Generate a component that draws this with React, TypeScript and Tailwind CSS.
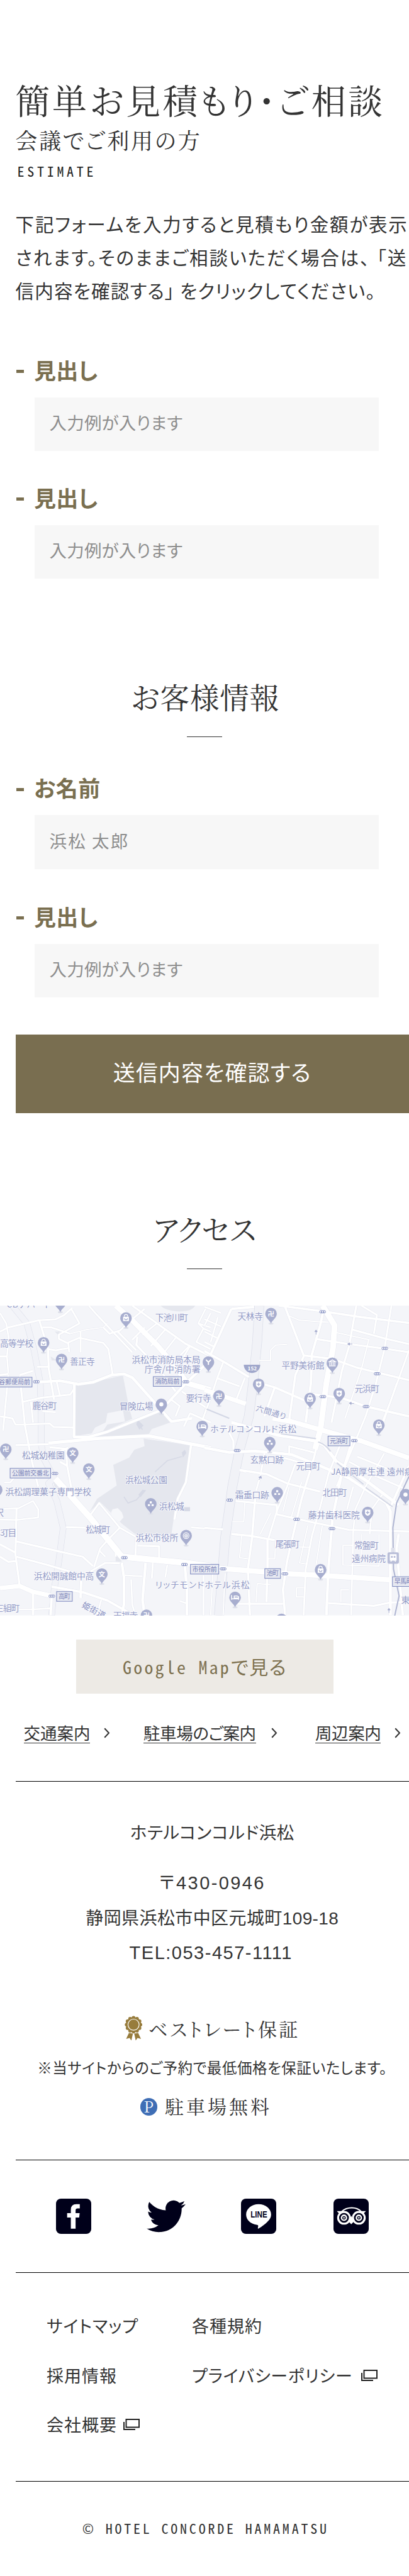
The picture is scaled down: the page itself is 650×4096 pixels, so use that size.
import type { ReactNode } from "react";

const SANS = "font-['Noto_Sans_CJK_JP',sans-serif]";
const SERIF = "font-['Noto_Serif_CJK_JP','Noto_Sans_CJK_JP',serif]";
const MONO = "font-['Noto_Sans_Mono_CJK_JP','Liberation_Mono',monospace]";
const LATIN = "font-['Liberation_Sans','Noto_Sans_CJK_JP',sans-serif]";

function Field({ label, tracking, placeholder, inputTracking }: { label: string; tracking: string; placeholder: string; inputTracking: string }) {
  return (
    <div>
      <label className="flex h-9 items-center text-[35px] leading-9 font-bold text-[#7a6f50]">
        <span aria-hidden="true" className="mt-1.5 mr-[16px] ml-px h-[5px] w-[12.5px] bg-[#7a6f50]" />
        <span className={tracking}>{label}</span>
      </label>
      <div className={`mt-[26px] ml-[30px] flex h-[85.4px] w-[547px] items-center bg-[#f7f7f7] pb-[5px] pl-[24px] text-[27.5px] text-[#8e8e8e] ${inputTracking}`}>
        {placeholder}
      </div>
    </div>
  );
}

function SectionTitle({ children }: { children: ReactNode }) {
  return (
    <div className={`flex flex-col items-center ${SERIF}`}>
      <h2 className="h-[50px] pl-px text-[46.5px] leading-[48px] tracking-[0.8px]">{children}</h2>
      <div className="mt-[38px] h-px w-14 bg-[#333]" />
    </div>
  );
}

function Chevron() {
  return (
    <svg viewBox="0 0 10 17" className="h-[17px] w-2.5" fill="none" stroke="#333" strokeWidth="2">
      <path d="M1.2 1.2 8 8.5 1.2 15.8" />
    </svg>
  );
}

function WindowIcon() {
  return (
    <svg viewBox="0 0 26 18" className="h-[18px] w-[26px]" fill="none" stroke="#222" strokeWidth="2">
      <path d="M4.5 1H25v12.5H4.5zM1 5v12h18" />
    </svg>
  );
}

type Label = [string, number, number, number, number?];
type Pin = [string, number, number];
type Road = [number, string];

const leftRoads: Road[] = [
  [8, "M0 60 30 110 42 180 34 270 40 350"],
  [9, "M0 150 40 130 190 95 270 90 310 70 350 35"],
  [10, "M190 95 210 160 232 230 236 330 262 480"],
  [9, "M345 40 385 110 285 165 285 185 325 205 385 180 500 205 525 235 545 355"],
  [9, "M205 130 250 130 340 160M390 150V250M330 200 335 250M230 235 270 240 330 230M180 320H240"],
  [5, "M340 160 420 140 500 130 520 110"],
  [9, "M430 24 470 70 640 250M500 130 530 160 580 145 640 90 700 40M570 150 660 240"],
  [10, "M640 24 760 110 900 210 1020 270"],
  [8, "M690 165 760 110M730 220 800 140M780 270 850 180M640 190 700 130M840 300 920 215"],
  [8, "M1000 30 960 110 985 135 950 200 1020 235M960 110 1020 130M985 135 1020 150M920 220 890 270"],
  [26, "M560 24 640 95 760 215 850 320 905 400 1020 432"],
  [10, "M665 175 660 215 770 330 850 440"],
  [14, "M180 395 290 388 380 405 450 395 540 360 600 355 640 372 830 585 930 570"],
  [10, "M0 270H34M0 360 40 355M95 360 160 340M95 365 110 500 120 600 150 760 185 900"],
  [9, "M110 490 200 470 340 455 360 425M275 395 290 460M150 490 160 590M205 535 270 540"],
  [9, "M40 360 15 630M0 560 60 570 75 600 120 600 240 595 260 612 358 615"],
  [13, "M360 400 358 660 430 660 520 635 780 530 900 400 1020 285"],
  [9, "M830 480 870 510 850 560M880 440 1000 520M920 545 1020 590M920 545 890 610M1000 520 980 580"],
  [16, "M235 690 470 668 720 655 1020 712"],
  [10, "M75 700 235 695M240 710 320 718 325 800 345 905M290 780 325 800M280 735 330 712"],
  [30, "M268 862 440 1055 590 1240 880 1268 1020 1286"],
  [9, "M440 1035 480 980 580 1100 660 1145M580 1100 530 1150 485 1200 455 1290M440 1310 510 1270 580 1272"],
  [8, "M0 1010 90 1005 160 970 185 1010 185 1050 80 1062 0 1060M20 880H50L75 850"],
  [10, "M80 1005 75 1230 95 1380M0 1180 75 1220M0 1240 40 1265 75 1262"],
  [10, "M75 1165 290 1215 400 1240 450 1285M80 1240 230 1280 400 1330"],
  [9, "M320 1097 420 1100M925 1098 1020 1105"],
  [11, "M925 700 900 880 860 960 845 1060"],
  [9, "M660 1150 655 1240M665 1187 770 1190V1255M740 1270 735 1345M560 1240V1190"],
  [13, "M590 1270 600 1340 600 1470 590 1524M705 1270 690 1450 700 1524M895 1285 905 1400 905 1524"],
  [8, "M605 1330 690 1335M635 1350 640 1470 655 1524M810 1280 800 1340M985 1330V1524M870 1455 900 1465"],
  [22, "M0 1392 95 1382 160 1410 250 1430"],
  [12, "M250 1385 400 1412 520 1452 640 1520M250 1430 245 1524M160 1410V1524M395 1310 390 1440"],
  [8, "M90 1495 160 1495 245 1490M490 1450 470 1524M480 1210 510 1240"],
];
const rightRoads: Road[] = [
  [12, "M0 245 100 300 215 370M130 40 30 260M130 40 240 30"],
  [8, "M0 30 80 60M0 90 80 125M0 150 60 180M30 60 0 120M65 80 30 200M0 200 50 225"],
  [9, "M90 300 60 380 30 470 0 550M60 375 170 415M195 375 150 490M0 435 100 460"],
  [22, "M0 432 90 462 200 500"],
  [11, "M360 24 560 50 760 80 990 108M390 30 480 265 620 282 740 325 990 385"],
  [6, "M400 70 460 95 600 105M265 290H320V240L345 215 400 212M640 155 800 190"],
  [12, "M575 50 560 120 520 260 515 400 490 590"],
  [28, "M572 24 630 120 622 230 590 400 562 620 535 720"],
  [10, "M535 185 700 210 870 232 990 250M715 140 880 185 990 210M735 24 700 220 665 340 615 590"],
  [9, "M760 24 835 70 820 160M905 24 870 240 830 400 780 560 705 740 640 900M990 240 900 490 840 640"],
  [11, "M480 270 440 360 410 580M270 400 340 420 500 490M340 420 290 560"],
  [12, "M500 450 660 470 780 512 990 560"],
  [7, "M795 190 760 330 680 570M930 400 860 610"],
  [24, "M330 570 420 585 560 625 760 680 990 762"],
  [16, "M130 590 350 650 540 680 580 700 640 780 780 870 940 990"],
  [10, "M100 600 140 680V720"],
  [14, "M0 712 120 735 240 728 420 745 560 800 700 860 880 980 900 1020 900 1524"],
  [9, "M410 750V705L530 735M290 740 270 850 250 920M200 830 170 820M380 760 520 800M700 780 830 850 990 920M740 755 900 820"],
  [11, "M170 820 300 840 400 885 560 925M560 640 530 760 470 960 430 1130 400 1260 380 1400 390 1524"],
  [9, "M660 690 600 840 560 1000 520 1140 490 1300 480 1524M440 790 400 900 350 1020 310 1150"],
  [10, "M150 970 350 990 350 1035 530 1075 700 1110 990 1118"],
  [13, "M720 660 660 860 620 1050 600 1300 590 1524"],
  [8, "M870 740 780 900 730 1010 720 1120 710 1524M720 900 690 1010M860 940 810 1010 800 1130"],
  [6, "M410 900 380 1020M470 880 420 1050M500 1090 460 1270 490 1275M570 1090 540 1280M195 980 190 1070H135M320 1030 270 1130"],
  [11, "M245 960 230 1150 210 1300 220 1524M130 1130 230 1140 340 1160M305 1150V1290L300 1460"],
  [6, "M180 1140 170 1245 210 1250M345 1165 340 1250 305 1250M410 1190 510 1195M670 1185V1280L845 1285V1130M760 1130V1230M670 1185H720"],
  [26, "M0 1290 90 1298 400 1322 640 1335 900 1352"],
  [10, "M0 1100 90 1108M160 1468 380 1468M600 1465 820 1478 900 1462 990 1460"],
  [6, "M255 1370 250 1460M255 1370 320 1375M445 1390H480M445 1390V1435H480M660 1460V1400H700M40 1320 30 1524M100 1320 90 1524"],
  [12, "M990 800 900 1000M940 1130 930 1200 945 1360 960 1524"],
];

const leftLabels: Label[] = [
  ["CBナバート", 32, 33, 215],
  ["下池川町", 752, 98, 158],
  ["高等学校", 0, 221, 162],
  ["善正寺", 338, 311, 121],
  ["浜松市消防局本局", 638, 300, 332],
  ["庁舎/中消防署", 700, 347, 270],
  ["鹿谷町", 157, 525, 118],
  ["冒険広場", 578, 527, 164],
  ["要行寺", 900, 488, 122],
  ["松城幼稚園", 107, 764, 206],
  ["浜松城公園", 606, 884, 204],
  ["浜松調理菓子専門学校", 26, 942, 416],
  ["浜松城", 770, 1011, 122],
  ["沢", -24, 1040, 40],
  ["松城町", 415, 1125, 118],
  ["3丁目", 0, 1140, 80],
  ["浜松市役所", 657, 1163, 206],
  ["浜松開誠館中高", 164, 1350, 291],
  ["リッチモンドホテル浜松", 752, 1392, 456],
  ["三組町", -22, 1505, 117],
  ["天福寺", 548, 1540, 120],
];
const rightLabels: Label[] = [
  ["天林寺", 160, 90, 123],
  ["平野美術館", 373, 330, 207],
  ["元浜町", 727, 441, 119],
  ["ホテルコンコルド浜松", 28, 635, 417],
  ["玄黙口跡", 221, 785, 163],
  ["元目町", 443, 816, 118],
  ["JA静岡厚生連 遠州病院", 612, 843, 440],
  ["霜垂口跡", 148, 956, 165],
  ["北田町", 571, 945, 118],
  ["藤井歯科医院", 502, 1052, 250],
  ["尾張町", 343, 1194, 117],
  ["常盤町", 725, 1200, 118],
  ["遠州病院", 713, 1263, 164],
  ["東", 952, 1464, 38],
];
const leftTags: [string, number, number, number][] = [
  ["谷郵便局前", -14, 371, 169],
  ["消防局前", 742, 368, 136],
  ["公園前交番北", 49, 812, 196],
  ["高町", 274, 1409, 76],
  ["市役所前", 922, 1277, 137],
];
const rightTags: [string, number, number, number][] = [
  ["元浜町", 598, 656, 106],
  ["池町", 292, 1298, 76],
  ["早馬町", 910, 1337, 106],
];
const leftPins: Pin[] = [
  ["none", 292, 8], ["bag", 610, 84], ["bag", 211, 204], ["卍", 298, 285], ["Y", 1009, 297], ["dot", 781, 502],
  ["bed", 979, 609], ["卍", 28, 720], ["文", 352, 738], ["文", 430, 816], ["none", -16, 916], ["dots", 730, 984],
  ["target", 901, 1138], ["文", 493, 1324], ["卍", 709, 1524],
];
const rightPins: Pin[] = [
  ["卍", 322, 63], ["museum", 619, 303], ["plus", 262, 405], ["plus", 652, 450], ["卍", 70, 462], ["bag", 511, 474],
  ["bag", 844, 603], ["dots", 316, 687], ["dots", 352, 930], ["dot", 973, 939], ["plus", 790, 1026], ["bag", 562, 1303],
  ["bed", 148, 1437], ["none", 373, 1544],
];
const leftSignals = [[176, 393], [900, 393], [266, 837], [602, 1245], [893, 1278], [251, 1431]];
const rightSignals = [[572, 54], [873, 231], [836, 354], [573, 465], [782, 513], [725, 678], [158, 726], [122, 966], [446, 1059], [617, 1104], [90, 1299], [389, 1323]];

function PinGlyph({ kind }: { kind: string }) {
  switch (kind) {
    case "bag":
      return (
        <g>
          <path d="M-14-6H14V15H-14z" fill="#fff" />
          <path d="M-8-6V-9A8 8 0 0 1 8-9V-6" fill="none" stroke="#fff" strokeWidth="3.5" />
          <path d="M-7 2A7 7 0 0 0 7 2" fill="none" stroke="#a8aecf" strokeWidth="3.5" />
        </g>
      );
    case "dot":
      return <circle r="10" fill="#fff" />;
    case "dots":
      return <path d="M-5-12H5V-2H-5zM-14 2H-4V11H-14zM4 2H14V11H4z" fill="#fff" />;
    case "plus":
      return (
        <g>
          <path d="M-13-14H13V6Q10 13 0 16Q-10 13-13 6z" fill="#fff" />
          <path d="M0-8V8M-8 0H8" stroke="#a8aecf" strokeWidth="4" />
        </g>
      );
    case "bed":
      return <path d="M-17-11V12M-17 7H17M17 12V-3L10-7H-4V3H15" fill="none" stroke="#fff" strokeWidth="4.5" />;
    case "target":
      return (
        <g fill="none" stroke="#fff" strokeWidth="3.5">
          <circle r="14" />
          <circle r="7" />
          <circle r="1.5" />
        </g>
      );
    case "museum":
      return <path d="M-15-7 0-16 15-7zM-12-4V10M-4-4V10M4-4V10M12-4V10M-16 13H16" fill="none" stroke="#fff" strokeWidth="4" />;
    case "Y":
      return <path d="M-12-11 0 1 12-11M0 0V14" fill="none" stroke="#fff" strokeWidth="6" />;
    case "none":
      return null;
    default:
      return (
        <text textAnchor="middle" y="12" fontSize="32" fontWeight="700" fill="#fff">
          {kind}
        </text>
      );
  }
}

function MapLayer({ roads, labels, tags, pins, signals }: { roads: Road[]; labels: Label[]; tags: [string, number, number, number][]; pins: Pin[]; signals: number[][] }) {
  return (
    <g>
      <g fill="none" strokeLinejoin="round">
        {roads.map(([w, d]) => <path key={d} d={d} stroke="#e4e6ef" strokeWidth={w + 3} />)}
        {roads.map(([w, d]) => <path key={d} d={d} stroke="#fff" strokeWidth={w} />)}
      </g>
      {signals.map(([x, y]) => (
        <g key={`${x}-${y}`} transform={`translate(${x} ${y})`}>
          <rect x="-14" y="-5.5" width="28" height="11" rx="4" fill="#fff" stroke="#7d88bd" strokeWidth="3" />
          <path d="M-5-4V4M5-4V4" stroke="#7d88bd" strokeWidth="4" />
        </g>
      ))}
      {pins.map(([kind, x, y]) => (
        <g key={`${x}-${y}`} transform={`translate(${x} ${y})`}>
          <ellipse cy="48" rx="12" ry="5" fill="#dfe1ea" />
          <path d="M0 49C-4 31-28 23-28 0A28 28 0 1 1 28 0C28 23 4 31 0 49z" fill="#a8aecf" />
          <PinGlyph kind={kind} />
        </g>
      ))}
      {labels.map(([t, x, y, len]) => (
        <text key={t} x={x} y={y} textLength={len} fontSize="42" fill="#929ac6" stroke="#fafafd" strokeWidth="5" paintOrder="stroke">
          {t}
        </text>
      ))}
      {tags.map(([t, x, y, w]) => (
        <g key={t}>
          <rect x={x} y={y} width={w} height="47" fill="#e7e9f1" stroke="#7a86bd" strokeWidth="3" />
          <text x={x + 9} y={y + 34} textLength={w - 18} fontSize="30" fill="#7680b8">{t}</text>
        </g>
      ))}
    </g>
  );
}

const STREAM = "M60 24 130 110 165 240 195 400 200 560 200 700 215 770 262 860 235 885 275 970 306 1100 285 1260 262 1400 250 1524";
const ROUTE_152 = "M1255 24 1245 200 1225 400 1205 560 1160 720 1125 900 1090 1150 1060 1524";

function AccessMap() {
  return (
    <svg viewBox="0 24 1980 1500" preserveAspectRatio="none" className={`block h-[492.5px] w-full ${SANS}`}>
      <rect y="24" width="1980" height="1500" fill="#f4f5f9" />
      <g fill="#e5e7ee">
        <path d="M365 408 450 395 595 362 625 520 640 572 500 635 365 655z" />
        <path d="M460 662 520 635 770 532 800 560 825 590 735 622 718 650z" />
        <path d="M695 668 920 700 900 880 855 960 830 1130 660 1135 590 1080 485 975 435 1020 470 960 565 895 548 795 625 760 650 722 700 705z" />
        <path d="M778 24H945Q930 52 870 52 800 50 778 24zM262 868 290 890 285 925 262 895zM560 1220 590 1265 560 1262z" />
        <path d="M245 270 275 290 250 290zM265 150 290 150 280 165z" />
      </g>
      <path d="M520 545 595 530 605 585 520 600 500 630 440 650 460 615 512 590z" fill="#f4f5f9" />
      <path d="M545 1010 570 1005 590 1025 598 1050 580 1070 545 1050 538 1025z" fill="#f6f7fa" />
      <path d="M600 950 620 980 660 965 700 920M750 830 810 775 880 755M665 590 690 625" fill="none" stroke="#d7dae6" strokeWidth="5" />
      <path d="M670 940 690 916 708 918 680 952zM665 575 695 605 675 625 660 600zM880 735 895 722 902 738 885 760zM890 1000H920V1020H890z" fill="#d7dae6" />
      <g fill="none" strokeLinejoin="round">
        <path d={STREAM} stroke="#d9dce8" strokeWidth="31" />
        <path d={STREAM} stroke="#f2f3f8" strokeWidth="28" />
        <path d={ROUTE_152} stroke="#d9dce8" strokeWidth="47" />
        <path d={ROUTE_152} stroke="#f1f2f7" strokeWidth="43" />
      </g>
      <MapLayer roads={leftRoads} labels={[]} tags={[]} pins={[]} signals={[]} />
      <g transform="translate(990 0)">
        <MapLayer roads={rightRoads} labels={[]} tags={[]} pins={[]} signals={[]} />
        <path d="M370 645 540 668M550 685Q580 690 610 730M640 785 770 890M780 905 910 998M10 525 120 570" fill="none" stroke="#d3d7e5" strokeWidth="6" />
        <path d="M1000 830 930 980 912 1100 915 1300 942 1430 920 1530" fill="none" stroke="#aeb4d1" strokeWidth="6" />
        <rect x="903" y="1197" width="18" height="22" fill="#dfe1ec" />
        <rect x="886" y="1219" width="55" height="55" rx="8" fill="#b9bed8" />
        <path d="M899 1230H928V1257H899zM901 1264 908 1257M926 1264 919 1257" fill="#fff" stroke="#fff" strokeWidth="4" />
        <path d="M903 1236H911V1245H903zM916 1236H924V1245H916z" fill="#b9bed8" />
        <path d="M190 310H270Q268 345 230 351 192 345 190 310z" fill="#a0a7cb" />
        <text x="231" y="338" textAnchor="middle" fontSize="25" fontWeight="700" fill="#fff">152</text>
        <path d="M540 164V145M534 150 540 142 546 150zM716 210H696M702 204 693 210 702 216zM724 498H706M710 491 701 497 710 503zM264 868 271 852M263 856 273 849 276 860zM893 1512V1494M887 1498 893 1490 899 1498z" fill="#a8aecf" stroke="#a8aecf" strokeWidth="3" />
      </g>
      <MapLayer roads={[]} labels={leftLabels} tags={leftTags} pins={leftPins} signals={leftSignals} />
      <g transform="translate(990 0)">
        <MapLayer roads={[]} labels={rightLabels} tags={rightTags} pins={rightPins} signals={rightSignals} />
        <text transform="translate(246 532) rotate(17)" textLength="150" fontSize="38" fill="#929ac6" stroke="#fafafd" strokeWidth="5" paintOrder="stroke">六間通り</text>
      </g>
      <text transform="translate(394 1482) rotate(29)" textLength="122" fontSize="40" fill="#868fc1" stroke="#fafafd" strokeWidth="5" paintOrder="stroke">姫街道</text>
    </svg>
  );
}

function Medal() {
  const lobes = Array.from({ length: 12 }, (_, i) => (i * Math.PI) / 6);
  return (
    <svg viewBox="0 0 29 40" className="h-[39.5px] w-[28.5px]" fill="#977c3c">
      <circle cx="14.5" cy="14.5" r="12.4" />
      {lobes.map((a) => <circle key={a} cx={14.5 + 11.2 * Math.cos(a)} cy={14.5 + 11.2 * Math.sin(a)} r="2.9" />)}
      <circle cx="14.5" cy="14.5" r="9" fill="none" stroke="#fff" strokeWidth="1.2" />
      <path d="M7 28 13.5 29 11 40 8 36 2.5 37.5zM22 28 15.5 29 18 40 21 36 26.5 37.5z" />
    </svg>
  );
}

function FacebookIcon() {
  return (
    <svg viewBox="0 0 57 57" className="size-14">
      <rect width="57" height="57" rx="8" fill="#00001a" />
      <path d="M24 48.5V30.5H18V23.5H24V18Q24 9 33 9H38.5V15.8H35Q31.7 15.8 31.7 19V23.5H38.3L37.5 30.5H31.7V48.5z" fill="#fff" />
    </svg>
  );
}

function TwitterIcon() {
  return (
    <svg viewBox="0 0 24 24" className="h-[62px] w-[62px]" fill="#00001a">
      <path d="M23.953 4.57a10 10 0 0 1-2.825.775 4.958 4.958 0 0 0 2.163-2.723c-.951.555-2.005.959-3.127 1.184a4.92 4.92 0 0 0-8.384 4.482C7.69 8.095 4.067 6.13 1.64 3.162a4.822 4.822 0 0 0-.666 2.475c0 1.71.87 3.213 2.188 4.096a4.904 4.904 0 0 1-2.228-.616v.06a4.923 4.923 0 0 0 3.946 4.827 4.996 4.996 0 0 1-2.212.085 4.936 4.936 0 0 0 4.604 3.417 9.867 9.867 0 0 1-6.102 2.105c-.39 0-.779-.023-1.17-.067a13.995 13.995 0 0 0 7.557 2.209c9.053 0 13.998-7.496 13.998-13.985 0-.21 0-.42-.015-.63A9.935 9.935 0 0 0 24 4.59z" />
    </svg>
  );
}

function LineIcon() {
  return (
    <svg viewBox="0 0 57 57" className="size-14">
      <rect width="57" height="57" rx="8" fill="#00001a" />
      <path d="M28.5 9C39.5 9 48.7 16.2 48.7 25.8 48.7 30 47 33.5 43 37.2 38.5 42 32 46.5 28 48.5 26.8 48.8 27.6 46 27.8 44.5 28 42.8 27 42.6 25 42.3 15.5 41 8.3 34.5 8.3 25.8 8.3 16.2 17.5 9 28.5 9z" fill="#fff" />
      <text x="29" y="31" textAnchor="middle" textLength="27" lengthAdjust="spacingAndGlyphs" fontSize="14.5" fontWeight="700" fill="#00001a" className={LATIN}>LINE</text>
    </svg>
  );
}

function OwlIcon() {
  return (
    <svg viewBox="0 0 57 57" className="size-14">
      <rect width="57" height="57" rx="8" fill="#00001a" />
      <path d="M13 21Q20 14.8 29.5 14.8T45 21" fill="none" stroke="#fff" strokeWidth="2" />
      <path d="M5.5 20H16.5L9.5 25zM52.5 20H41L48 25z" fill="#fff" />
      <path d="M23.5 36 28.7 41.5 34 36 28.7 28z" fill="#fff" />
      {[17, 41].map((x) => (
        <g key={x} fill="none" stroke="#fff">
          <circle cx={x} cy="31" r="9.5" fill="#00001a" strokeWidth="3.2" />
          <circle cx={x} cy="31" r="4" strokeWidth="2.4" />
          <circle cx={x} cy="31" r="1.1" fill="#fff" strokeWidth="0.5" />
        </g>
      ))}
    </svg>
  );
}

export default function App() {
  return (
    <main className={`h-[4096px] w-[650px] overflow-hidden bg-white text-[#333] whitespace-nowrap [font-feature-settings:'palt'] ${SANS}`}>
      <section className="pl-[24.6px]">
        <h1 className={`pt-32 text-[55px] leading-[60px] tracking-[3.5px] ${SERIF}`}>簡単お見積もり・ご相談</h1>
        <p className={`mt-3.5 text-[35px] leading-10 tracking-[2.7px] ${SERIF}`}>会議でご利用の方</p>
        <p className={`mt-[17px] pl-[3px] text-[22px] leading-6 tracking-[4.7px] text-[#222] ${MONO}`}>ESTIMATE</p>
        <p className="mt-[46px] text-[29.5px] leading-[53.2px]">
          <span className="block tracking-[1.8px]">下記フォームを入力すると見積もり金額が表示</span>
          <span className="block tracking-[1.95px]">
            されます。そのままご相談いただく場合は、<span className="ml-2.5">「送</span>
          </span>
          <span className="block tracking-[1.2px]">
            信内容を確認する」<span className="ml-2">をクリックしてください。</span>
          </span>
        </p>
        <div className="mt-[81px] flex flex-col gap-[55.5px]">
          <Field label="見出し" tracking="tracking-[0.2px]" placeholder="入力例が入ります" inputTracking="tracking-[0.2px]" />
          <Field label="見出し" tracking="tracking-[0.2px]" placeholder="入力例が入ります" inputTracking="tracking-[0.2px]" />
        </div>
      </section>

      <section className="mt-[163.3px]">
        <SectionTitle>お客様情報</SectionTitle>
        <div className="mt-[62.3px] flex flex-col gap-[56.8px] pl-[24.6px]">
          <Field label="お名前" tracking="tracking-[0.7px]" placeholder="浜松 太郎" inputTracking="tracking-[2.1px]" />
          <Field label="見出し" tracking="tracking-[0.2px]" placeholder="入力例が入ります" inputTracking="tracking-[0.2px]" />
        </div>
        <div className="mt-[59.2px] pl-[24.6px]">
          <button className="flex h-[125px] w-full items-center justify-center bg-[#796e50] pb-[7px] text-[35px] tracking-[1.1px] text-white">
            送信内容を確認する
          </button>
        </div>
      </section>

      <section className="mt-[158.5px]">
        <SectionTitle>アクセス</SectionTitle>
        <div className="mt-[58.5px]">
          <AccessMap />
        </div>
        <a className="mt-[38.5px] ml-[121.2px] flex h-[85.7px] w-[408.8px] items-center justify-center bg-[#edeae5] pb-px text-[#7d7150]">
          <span className={`text-[28px] tracking-[3.2px] ${MONO}`}>Google Map</span>
          <span className="text-[30px] tracking-[1.5px]">で見る</span>
        </a>
        <nav className="mt-[46px] flex h-[33px] items-center pl-[37.5px] text-[26.5px] leading-8">
          <span className="w-[105px] border-b border-[#333]">交通案内</span>
          <span className="mr-[53.5px] ml-[22px]"><Chevron /></span>
          <span className="w-[178.5px] border-b border-[#333] tracking-[-0.4px]">駐車場のご案内</span>
          <span className="mr-[60px] ml-[24.5px]"><Chevron /></span>
          <span className="w-[104px] border-b border-[#333] tracking-[-0.4px]">周辺案内</span>
          <span className="ml-[22px]"><Chevron /></span>
        </nav>
      </section>

      <footer className="mt-[60.5px] pl-[24.6px]">
        <div className="flex flex-col items-center border-t border-black pt-[61px]">
          <p className="text-[27.5px] leading-9 tracking-[0.5px]">ホテルコンコルド浜松</p>
          <address className={`mt-[37px] text-center text-[29px] leading-[55.15px] not-italic ${LATIN}`}>
            <p className="tracking-[2.4px]">〒430-0946</p>
            <p className="text-[28px] tracking-[0.4px]">静岡県浜松市中区元城町109-18</p>
            <p className="pr-1 tracking-[1.5px]">TEL:053-457-1111</p>
          </address>
          <p className={`mt-[72px] flex h-10 items-center gap-2.5 text-[30px] leading-10 tracking-[3.4px] ${SERIF}`}>
            <Medal />
            <span>ベストレート保証</span>
          </p>
          <p className="mt-[27px] text-[23.5px] leading-[30px] tracking-[0.53px]">※当サイトからのご予約で最低価格を保証いたします。</p>
          <p className={`mt-[26px] flex h-10 items-center gap-3 pr-5 text-[30px] leading-10 tracking-[4px] ${SERIF}`}>
            <span className="mt-1 flex size-[27.5px] items-center justify-center rounded-full bg-[#3f6eb5] pb-0.5 pl-1 text-[24px] text-white">P</span>
            <span>駐車場無料</span>
          </p>
        </div>
        <div className="mt-[65.8px] flex h-[180.2px] items-center border-y border-black">
          <span className="ml-16"><FacebookIcon /></span>
          <span className="ml-[88px]"><TwitterIcon /></span>
          <span className="ml-[88px]"><LineIcon /></span>
          <span className="ml-[91px]"><OwlIcon /></span>
        </div>
        <nav className="mt-[64px] mb-[70px] grid grid-cols-[231px_1fr] gap-y-[38.8px] pl-[49.5px] text-[27px] leading-10">
          <a className="tracking-[0.95px]">サイトマップ</a>
          <a className="tracking-[1px]">各種規約</a>
          <a className="tracking-[1px]">採用情報</a>
          <a className="flex items-center gap-[14px] tracking-[0.7px]">プライバシーポリシー<WindowIcon /></a>
          <a className="flex items-center gap-[10px] tracking-[1px]">会社概要<WindowIcon /></a>
        </nav>
        <div className={`border-t border-black pt-[61px] pr-[21px] text-center text-[22px] leading-6 tracking-[3.8px] ${MONO}`}>
          © HOTEL CONCORDE HAMAMATSU
        </div>
      </footer>
    </main>
  );
}
